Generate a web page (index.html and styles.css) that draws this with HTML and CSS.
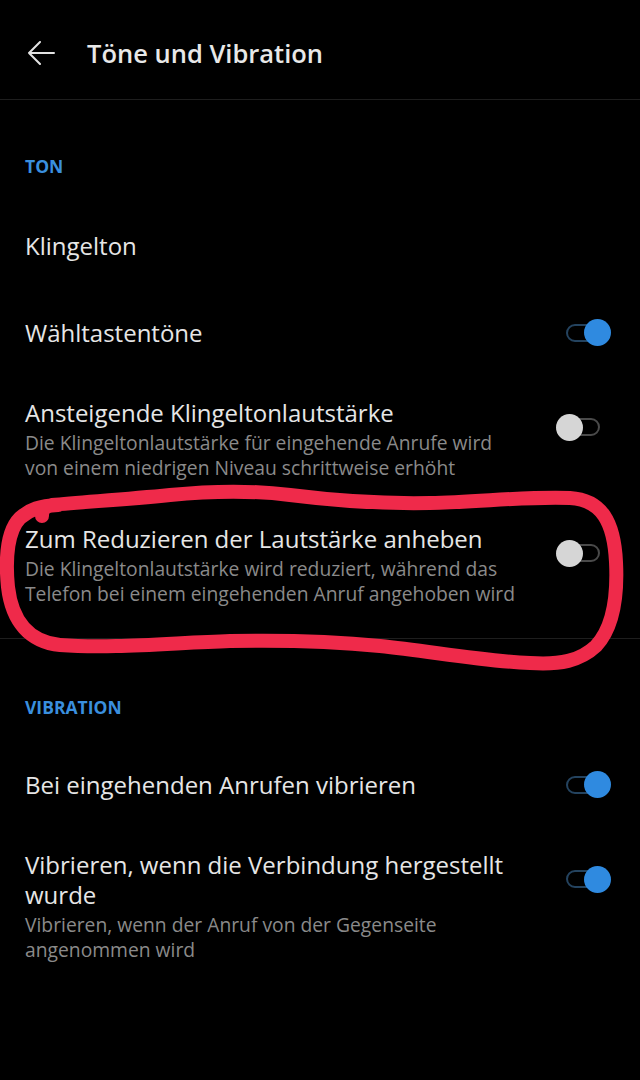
FILE: index.html
```html
<!DOCTYPE html>
<html lang="de">
<head>
<meta charset="utf-8">
<title>Töne und Vibration</title>
<link rel="stylesheet" href="styles.css">
</head>
<body>
<div class="screen">
  <header class="appbar">
    <svg class="back" width="28" height="24" viewBox="0 0 28 24"><path d="M27 12H2M13 1L2 12l11 11" fill="none" stroke="#e2e2e2" stroke-width="2" stroke-linecap="round" stroke-linejoin="round"/></svg>
    <h1 class="title">Töne und Vibration</h1>
  </header>

  <section class="group">
    <div class="group-label">TON</div>
    <div class="row single"><div class="text"><div class="row-title">Klingelton</div></div></div>
    <div class="row single">
      <div class="text"><div class="row-title">Wähltastentöne</div></div>
      <div class="widget"><span class="switch on"></span></div>
    </div>
    <div class="row multi">
      <div class="text">
        <div class="row-title">Ansteigende Klingeltonlautstärke</div>
        <div class="row-sub">Die Klingeltonlautstärke für eingehende Anrufe wird von einem niedrigen Niveau schrittweise erhöht</div>
      </div>
      <div class="widget"><span class="switch"></span></div>
    </div>
    <div class="row multi">
      <div class="text">
        <div class="row-title">Zum Reduzieren der Lautstärke anheben</div>
        <div class="row-sub">Die Klingeltonlautstärke wird reduziert, während das Telefon bei einem eingehenden Anruf angehoben wird</div>
      </div>
      <div class="widget"><span class="switch"></span></div>
    </div>
  </section>

  <section class="group divided">
    <div class="group-label">VIBRATION</div>
    <div class="row single">
      <div class="text"><div class="row-title">Bei eingehenden Anrufen vibrieren</div></div>
      <div class="widget"><span class="switch on"></span></div>
    </div>
    <div class="row multi">
      <div class="text">
        <div class="row-title">Vibrieren, wenn die Verbindung hergestellt wurde</div>
        <div class="row-sub">Vibrieren, wenn der Anruf von der Gegenseite angenommen wird</div>
      </div>
      <div class="widget"><span class="switch on"></span></div>
    </div>
  </section>

  <svg class="scribble" width="640" height="1080" viewBox="0 0 640 1080">
    <path d="M42 516C42 510 44 507 52 505C80 502 120 500 170 495C210 491 250 490 290 495C330 500 380 504 430 503C480 502 530 496 570 498C602 500 614 522 616 562C618 602 611 630 596 646C580 661 560 665 530 663C480 661 430 651 380 646C330 641 280 640 230 641C170 643 110 649 60 645C30 642 12 622 8 587C5 557 8 530 20 518C30 509 40 506 58 505" fill="none" stroke="#ef2a4a" stroke-width="14" stroke-linecap="round" stroke-linejoin="round"/>
  </svg>
</div>
</body>
</html>
```

FILE: styles.css
```css
html, body {
  margin: 0;
  padding: 0;
  background: #000;
}

.screen {
  position: relative;
  width: 640px;
  height: 1080px;
  background: #000;
  font-family: "Open Sans", "Noto Sans", sans-serif;
  color: #e6e6e6;
  overflow: hidden;
}

.appbar {
  height: 100px;
  border-bottom: 1px solid #1e1e1e;
  display: flex;
  align-items: center;
  padding-left: 27px;
  padding-top: 6px;
  gap: 32px;
  box-sizing: border-box;
}

.back {
  display: block;
}

.title {
  margin: 0;
  font-size: 25.5px;
  font-weight: 600;
  color: #e8e8e8;
  line-height: 32px;
}

.group {
  display: flex;
  flex-direction: column;
}

.divided {
  border-top: 1px solid #1e1e1e;
  margin-top: 10px;
}

.group-label {
  margin: 56px 0 26px 25px;
  height: 20px;
  line-height: 20px;
  font-size: 17.5px;
  font-weight: 700;
  color: #3a8fde;
}

.divided .group-label {
  margin-top: 58px;
  margin-bottom: 24px;
}

.row {
  display: flex;
  align-items: center;
  padding: 0 40px 0 25px;
  gap: 41px;
}

.row.single {
  padding-top: 28.5px;
  padding-bottom: 28.5px;
}

.row.multi {
  padding-top: 22px;
  padding-bottom: 22px;
  align-items: flex-start;
}

.text {
  flex: 1;
  min-width: 0;
}

.row-title {
  font-size: 24px;
  line-height: 30px;
  color: #e6e6e6;
}

.row-sub {
  margin-top: 3px;
  font-size: 19.3px;
  line-height: 24.5px;
  color: #8a8a8a;
}

.widget {
  width: 34px;
  height: 30px;
  display: flex;
  align-items: center;
  flex: none;
}

.row.multi .widget {
  margin-top: 14px;
}

.switch {
  position: relative;
  width: 30px;
  height: 14px;
  border: 2px solid #4a4a4a;
  border-radius: 10px;
  box-sizing: content-box;
}

.switch::after {
  content: "";
  position: absolute;
  top: 50%;
  left: -12.5px;
  width: 27px;
  height: 27px;
  margin-top: -13.5px;
  border-radius: 50%;
  background: #d6d6d6;
}

.switch.on {
  border-color: #24435f;
}

.switch.on::after {
  left: auto;
  right: -12.5px;
  background: #2f8ae0;
}

.scribble {
  position: absolute;
  left: 0;
  top: 0;
  pointer-events: none;
}
```
